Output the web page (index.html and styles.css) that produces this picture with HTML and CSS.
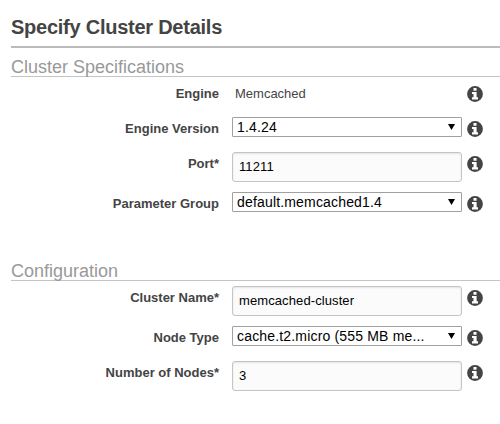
FILE: index.html
```html
<!DOCTYPE html>
<html lang="en">
<head>
<meta charset="utf-8">
<title>Specify Cluster Details</title>
<link rel="stylesheet" href="styles.css">
</head>
<body>
<svg class="sprite" aria-hidden="true">
  <symbol id="info" viewBox="0 0 16 16">
    <circle cx="8" cy="8" r="7.9" fill="#444"/>
    <path fill="#fff" d="M6.5 2h3v2.8h-3zM5 6h4.6v5.3H11v2.1H5v-2.1h1.5V8.1H5z"/>
  </symbol>
</svg>
<main class="page">
  <h1 class="title">Specify Cluster Details</h1>
  <section class="group">
    <h2 class="heading">Cluster Specifications</h2>
    <div class="row"><span class="label">Engine</span><span class="static">Memcached</span><svg class="info"><use href="#info"/></svg></div>
    <div class="row"><span class="label">Engine Version</span><div class="select"><span>1.4.24</span><i class="arrow"></i></div><svg class="info"><use href="#info"/></svg></div>
    <div class="row tall"><span class="label">Port*</span><div class="input">11211</div><svg class="info"><use href="#info"/></svg></div>
    <div class="row"><span class="label">Parameter Group</span><div class="select"><span>default.memcached1.4</span><i class="arrow"></i></div><svg class="info"><use href="#info"/></svg></div>
  </section>
  <section class="group config">
    <h2 class="heading">Configuration</h2>
    <div class="row tall"><span class="label">Cluster Name*</span><div class="input">memcached-cluster</div><svg class="info"><use href="#info"/></svg></div>
    <div class="row"><span class="label">Node Type</span><div class="select"><span>cache.t2.micro (555 MB me...</span><i class="arrow"></i></div><svg class="info"><use href="#info"/></svg></div>
    <div class="row tall"><span class="label">Number of Nodes*</span><div class="input">3</div><svg class="info"><use href="#info"/></svg></div>
  </section>
</main>
</body>
</html>
```
FILE: styles.css
```css
* { box-sizing: border-box; }
body {
  margin: 0;
  background: #fff;
  color: #444;
  font-family: "Liberation Sans", Arial, sans-serif;
}
.sprite { display: none; }
.page { padding: 15px 0 0 11px; }
.title {
  margin: 0;
  height: 33px;
  border-bottom: 2px solid #bbb;
  font-size: 20px;
  letter-spacing: -0.25px;
  line-height: 24px;
  white-space: nowrap;
}
.heading {
  margin: 0 0 5px;
  height: 29px;
  padding-top: 8px;
  border-bottom: 1px solid #c4c4c4;
  color: #999;
  font-size: 18px;
  font-weight: 400;
  line-height: 22px;
}
.config { padding-top: 25px; }
.row {
  display: grid;
  grid-template-columns: 208px 13px 230px 5px 16px;
  align-items: start;
  height: 35px;
}
.tall { height: 40px; }
.row > :nth-child(2) { grid-column: 3; }
.row > :nth-child(3) { grid-column: 5; }
.label {
  padding-top: 4px;
  font-size: 13px;
  font-weight: 700;
  line-height: 16px;
  text-align: right;
}
.static {
  padding: 4px 0 0 3px;
  font-size: 13px;
  line-height: 16px;
}
.select {
  display: flex;
  justify-content: space-between;
  align-items: center;
  height: 20px;
  padding: 0 6px 0 4px;
  border: 1px solid #a0a0a0;
  border-radius: 1px;
  color: #000;
  font-size: 14px;
  letter-spacing: 0.17px;
  line-height: 18px;
}
.arrow {
  width: 7px;
  height: 6px;
  background: #000;
  clip-path: polygon(0 0, 100% 0, 50% 100%);
}
.input {
  height: 30px;
  padding: 0 6px;
  border: 1px solid #c4c4c4;
  border-radius: 3px;
  background: #fbfbfb;
  box-shadow: inset 0 1px 2px #e4e4e4;
  color: #000;
  font-size: 13px;
  letter-spacing: 0.1px;
  line-height: 28px;
}
.info { width: 16px; height: 16px; margin-top: 4px; }
```
